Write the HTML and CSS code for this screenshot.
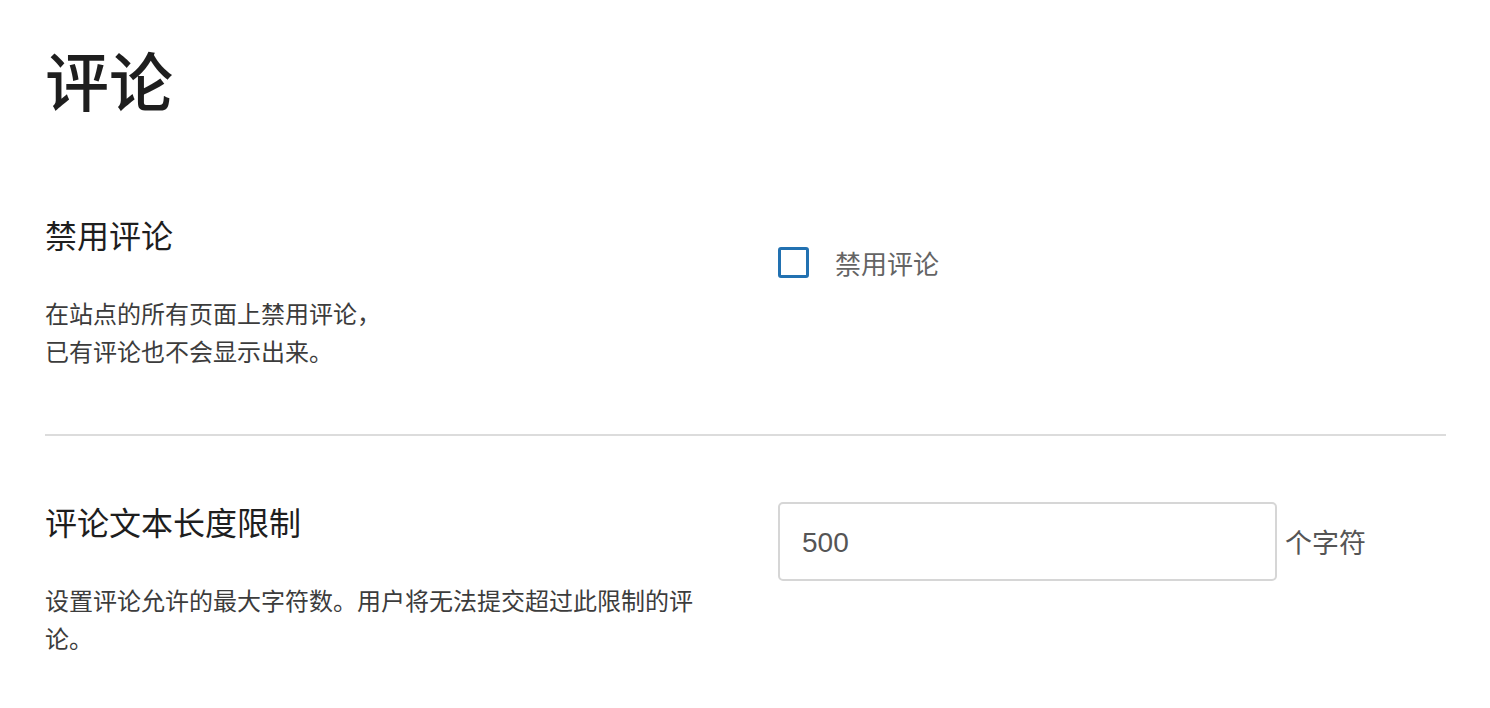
FILE: index.html
```html
<!DOCTYPE html>
<html lang="zh-CN">
<head>
<meta charset="utf-8">
<title>评论</title>
<link rel="stylesheet" href="styles.css">
</head>
<body>
<div class="page">
  <h1 class="title">评论</h1>
  <section class="setting setting-first">
    <div class="info">
      <h2 class="setting-title">禁用评论</h2>
      <p class="setting-desc">在站点的所有页面上禁用评论，<br>已有评论也不会显示出来。</p>
    </div>
    <div class="control control-check">
      <label class="check">
        <span class="check-box"></span>
        <span class="check-label">禁用评论</span>
      </label>
    </div>
  </section>
  <section class="setting setting-second">
    <div class="info">
      <h2 class="setting-title">评论文本长度限制</h2>
      <p class="setting-desc">设置评论允许的最大字符数。用户将无法提交超过此限制的评论。</p>
    </div>
    <div class="control control-input">
      <div class="input-box">500</div>
      <span class="unit">个字符</span>
    </div>
  </section>
</div>
</body>
</html>
```

FILE: styles.css
```css
html, body {
  margin: 0;
  padding: 0;
  background: #ffffff;
}
body {
  font-family: "Noto Sans CJK SC", "Noto Sans", sans-serif;
  color: #1e1e1e;
}
.page {
  padding: 0 44px 0 45px;
}
.title {
  margin: 0;
  padding-top: 40px;
  font-size: 64px;
  line-height: 76px;
  font-weight: 500;
  color: #1e1e1e;
}
.setting {
  display: grid;
  grid-template-columns: 1fr 1fr;
  column-gap: 65px;
  align-items: start;
}
.setting-first {
  margin-top: 98px;
  padding-bottom: 64px;
  border-bottom: 2px solid #dcdcdc;
}
.setting-second {
  padding-top: 65px;
}
.setting-title {
  margin: 0;
  font-size: 32px;
  line-height: 40px;
  font-weight: 400;
  color: #1e1e1e;
}
.setting-desc {
  margin: 40px 0 0;
  font-size: 24px;
  line-height: 38px;
  color: #3c3c3c;
}
.control-check {
  padding-top: 33px;
}
.check {
  display: flex;
  align-items: center;
  gap: 26px;
}
.check-box {
  width: 25px;
  height: 25px;
  border: 3px solid #2271b1;
  border-radius: 3px;
}
.check-label {
  font-size: 26px;
  line-height: 30px;
  color: #646464;
}
.control-input {
  display: flex;
  align-items: center;
  gap: 8px;
  margin-top: 1px;
}
.input-box {
  box-sizing: border-box;
  width: 499px;
  height: 79px;
  border: 2px solid #d6d6d6;
  border-radius: 5px;
  padding: 2px 22px 0;
  display: flex;
  align-items: center;
  font-family: "Liberation Sans", Arial, sans-serif;
  font-size: 28px;
  color: #555555;
}
.unit {
  font-size: 27px;
  color: #555555;
}
```
